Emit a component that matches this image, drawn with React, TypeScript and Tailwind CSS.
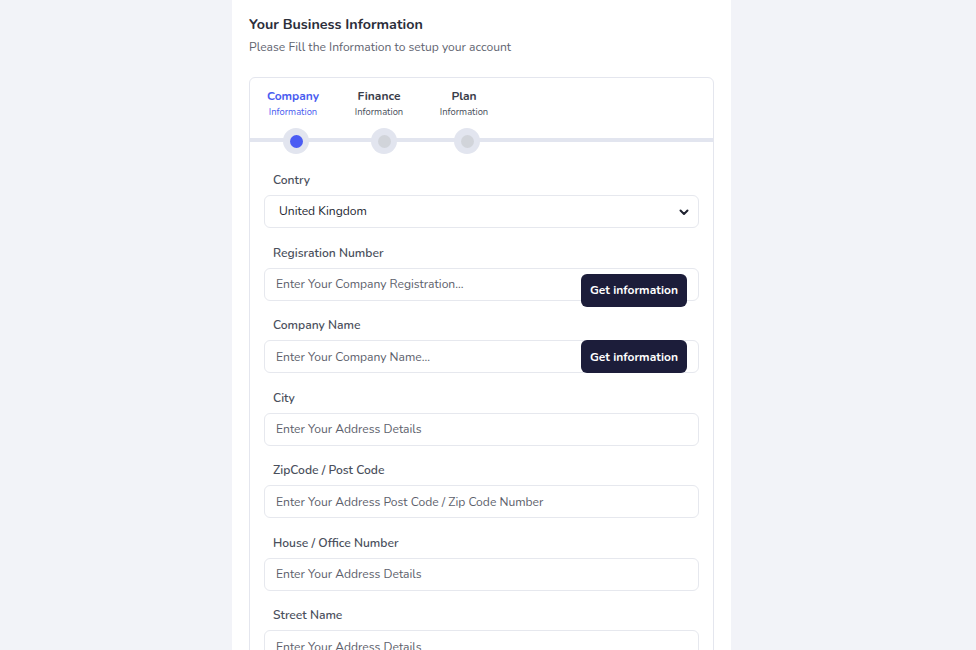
import React from "react";

const font = { fontFamily: "Nunito, Lato, 'Open Sans', sans-serif" };

function Label({ children }: { children: React.ReactNode }) {
  return (
    <div className="pl-[9px] text-[12.1px] leading-[18px] font-semibold text-[#4a4f5c]">
      {children}
    </div>
  );
}

function TextInput({ placeholder }: { placeholder: string }) {
  return (
    <input
      placeholder={placeholder}
      className="w-full h-[33px] rounded-md border border-[#e6e8ee] bg-white px-[11px] text-[12.1px] text-[#374151] placeholder:text-[#5c606b] outline-none"
      style={font}
    />
  );
}

function ButtonInput({ placeholder, offset }: { placeholder: string; offset: boolean }) {
  return (
    <div className="relative">
      <TextInput placeholder={placeholder} />
      <button
        className={`absolute right-[12px] ${offset ? "top-[6px]" : "top-0"} h-[33px] w-[106px] rounded-md bg-[#1c1d3a] text-[12px] font-bold text-white`}
        style={font}
      >
        Get information
      </button>
    </div>
  );
}

export default function App() {
  const fields: { label: string; placeholder: string; button?: boolean; offset?: boolean }[] = [
    { label: "Regisration Number", placeholder: "Enter Your Company Registration...", button: true, offset: true },
    { label: "Company Name", placeholder: "Enter Your Company Name...", button: true, offset: false },
    { label: "City", placeholder: "Enter Your Address Details" },
    { label: "ZipCode / Post Code", placeholder: "Enter Your Address Post Code / Zip Code Number" },
    { label: "House / Office Number", placeholder: "Enter Your Address Details" },
    { label: "Street Name", placeholder: "Enter Your Address Details" },
  ];
  return (
    <div className="min-h-screen bg-[#f2f3f8] flex justify-center overflow-hidden pr-[13px]" style={font}>
      <div className="w-[499px] bg-white px-[17px] pt-[15px] pb-10">
        <h1 className="text-[14.3px] leading-[20px] font-bold text-[#2b2e3a]">Your Business Information</h1>
        <p className="mt-[3px] text-[12.1px] leading-[18px] text-[#5f6470]">
          Please Fill the Information to setup your account
        </p>

        <div className="mt-[21px] rounded-md border border-[#e4e6ee]">
          <div className="flex pt-[10px]">
            <div className="w-[86px] text-center">
              <div className="text-[12px] leading-[17px] font-bold text-[#4a5cf0]">Company</div>
              <div className="text-[9.4px] leading-[14px] text-[#4a5cf0]">Information</div>
            </div>
            <div className="w-[86px] text-center">
              <div className="text-[12px] leading-[17px] font-bold text-[#3a3d4a]">Finance</div>
              <div className="text-[9.4px] leading-[14px] text-[#4a4f5c]">Information</div>
            </div>
            <div className="w-[84px] text-center">
              <div className="text-[12px] leading-[17px] font-bold text-[#3a3d4a]">Plan</div>
              <div className="text-[9.4px] leading-[14px] text-[#4a4f5c]">Information</div>
            </div>
          </div>

          <div className="relative mt-[9px] flex h-[26px] items-center">
            <div className="absolute left-0 right-0 top-[10px] h-[4px] bg-[#e2e5ef]" />
            <div className="relative ml-[33px] flex h-[26px] w-[26px] items-center justify-center rounded-full bg-[#e2e5ef]">
              <div className="h-[13px] w-[13px] rounded-full bg-[#4b5cf3]" />
            </div>
            <div className="relative ml-[62px] flex h-[26px] w-[26px] items-center justify-center rounded-full bg-[#e2e5ef]">
              <div className="h-[13px] w-[13px] rounded-full bg-[#d1d4da]" />
            </div>
            <div className="relative ml-[57px] flex h-[26px] w-[26px] items-center justify-center rounded-full bg-[#e2e5ef]">
              <div className="h-[13px] w-[13px] rounded-full bg-[#d1d4da]" />
            </div>
          </div>

          <div className="px-[14px] pt-[17px] pb-6 flex flex-col gap-[15.5px]">
            <div className="flex flex-col gap-[6px]">
              <Label>Contry</Label>
              <div className="flex h-[33px] w-full items-center justify-between rounded-md border border-[#e6e8ee] bg-white pl-[14px] pr-[8px] text-[12.1px] text-[#23262f]">
                <span>United Kingdom</span>
                <svg width="12" height="12" viewBox="0 0 12 12">
                  <path d="M2.5 4.5 L6 8 L9.5 4.5" fill="none" stroke="#1f2230" strokeWidth="2" strokeLinecap="round" strokeLinejoin="round" />
                </svg>
              </div>
            </div>
            {fields.map((f) => (
              <div key={f.label} className="flex flex-col gap-[6px]">
                <Label>{f.label}</Label>
                {f.button ? (
                  <ButtonInput placeholder={f.placeholder} offset={!!f.offset} />
                ) : (
                  <TextInput placeholder={f.placeholder} />
                )}
              </div>
            ))}
          </div>
        </div>
      </div>
    </div>
  );
}
